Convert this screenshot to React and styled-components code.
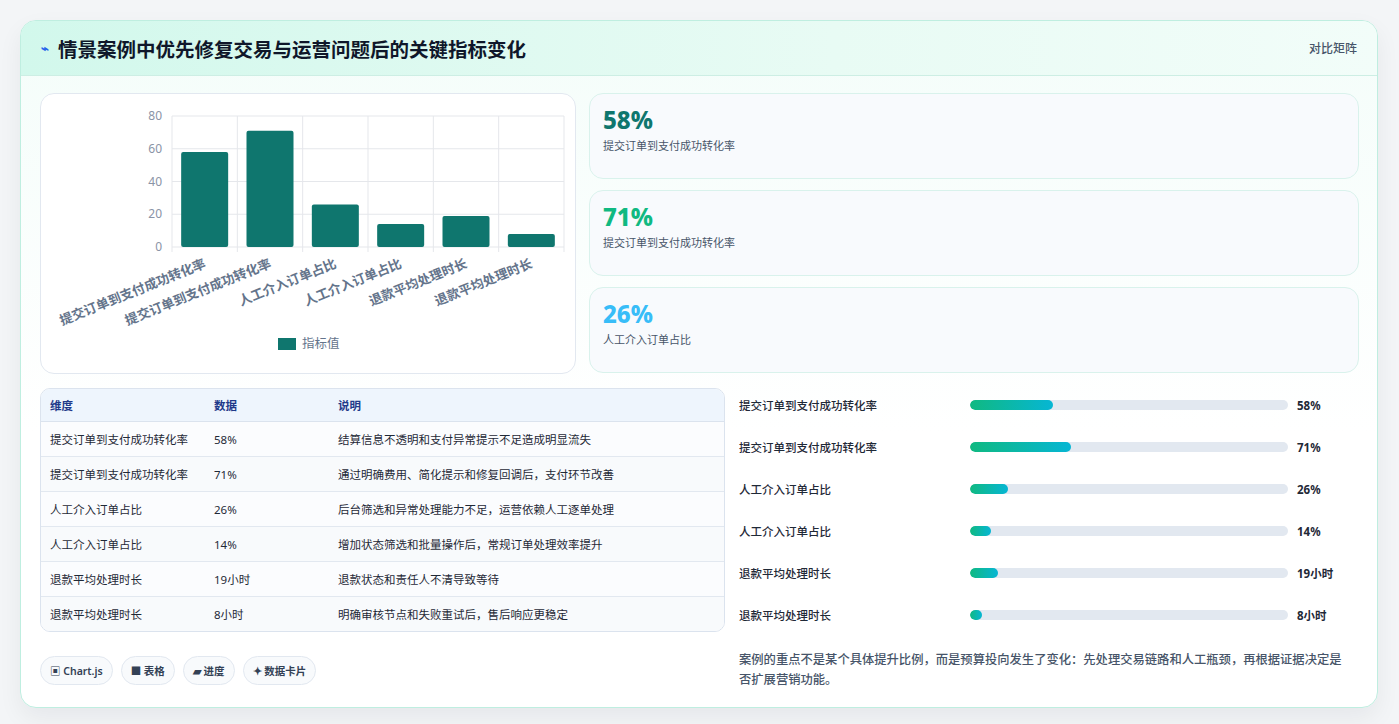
import styled, { createGlobalStyle } from "styled-components";

const GlobalStyle = createGlobalStyle`
  body {
    margin: 0;
    background: #f3f5f7;
    font-family: "Noto Sans", "Noto Sans CJK SC", sans-serif;
    color: #0f172a;
  }
`;

const metrics = [
  { label: "提交订单到支付成功转化率", value: 58, text: "58%", note: "结算信息不透明和支付异常提示不足造成明显流失" },
  { label: "提交订单到支付成功转化率", value: 71, text: "71%", note: "通过明确费用、简化提示和修复回调后，支付环节改善" },
  { label: "人工介入订单占比", value: 26, text: "26%", note: "后台筛选和异常处理能力不足，运营依赖人工逐单处理" },
  { label: "人工介入订单占比", value: 14, text: "14%", note: "增加状态筛选和批量操作后，常规订单处理效率提升" },
  { label: "退款平均处理时长", value: 19, text: "19小时", note: "退款状态和责任人不清导致等待" },
  { label: "退款平均处理时长", value: 8, text: "8小时", note: "明确审核节点和失败重试后，售后响应更稳定" },
];

const statColors = ["#0f766e", "#10b981", "#38bdf8"];

// bar chart drawn by hand, Chart.js look
function BarChart() {
  const x0 = 131, x1 = 523, yTop = 22, yBase = 153;
  const step = (x1 - x0) / 6;
  const scale = (yBase - yTop) / 80;
  return (
    <svg width="535" height="279" viewBox="0 0 535 279">
      {[0, 20, 40, 60, 80].map((t) => {
        const y = yBase - t * scale;
        return (
          <g key={t}>
            <line x1={x0} x2={x1} y1={y} y2={y} stroke="#e5e7eb" />
            <text x={x0 - 10} y={y + 4} fontSize="12" fill="#8a94a6" textAnchor="end">{t}</text>
          </g>
        );
      })}
      {Array.from({ length: 7 }).map((_, i) => (
        <line key={i} x1={x0 + i * step} x2={x0 + i * step} y1={yTop} y2={yBase + 5} stroke="#e5e7eb" />
      ))}
      {metrics.map((m, i) => {
        const cx = x0 + step * (i + 0.5);
        const h = m.value * scale;
        return (
          <g key={i}>
            <rect x={cx - 23.5} y={yBase - h} width="47" height={h} rx="2" fill="#0f766e" />
            <text
              x={cx + 2}
              y={yBase + 20}
              fontSize="13"
              fontWeight="600"
              fill="#64748b"
              textAnchor="end"
              transform={`rotate(-22 ${cx + 2} ${yBase + 20})`}
            >
              {m.label}
            </text>
          </g>
        );
      })}
      <rect x="237" y="244" width="18" height="12" fill="#0f766e" />
      <text x="261" y="254" fontSize="12.5" fill="#64748b">指标值</text>
    </svg>
  );
}

export default function App() {
  return (
    <>
      <GlobalStyle />
      <Page>
        <Card>
          <Header>
            <Title>
              <Bolt>⌁</Bolt>情景案例中优先修复交易与运营问题后的关键指标变化
            </Title>
            <HeaderTag>对比矩阵</HeaderTag>
          </Header>
          <Body>
            <TopRow>
              <ChartPanel>
                <BarChart />
              </ChartPanel>
              <StatList>
                {metrics.slice(0, 3).map((m, i) => (
                  <StatCard key={i}>
                    <StatValue $color={statColors[i]}>{m.text}</StatValue>
                    <StatLabel>{m.label}</StatLabel>
                  </StatCard>
                ))}
              </StatList>
            </TopRow>
            <BottomRow>
              <LeftCol>
                <Table>
                  <colgroup>
                    <col style={{ width: 164 }} />
                    <col style={{ width: 124 }} />
                    <col />
                  </colgroup>
                  <thead>
                    <tr>
                      <Th>维度</Th>
                      <Th>数据</Th>
                      <Th>说明</Th>
                    </tr>
                  </thead>
                  <tbody>
                    {metrics.map((m, i) => (
                      <Tr key={i}>
                        <Td>{m.label}</Td>
                        <Td>{m.text}</Td>
                        <Td>{m.note}</Td>
                      </Tr>
                    ))}
                  </tbody>
                </Table>
                <Chips>
                  <Chip>▣ Chart.js</Chip>
                  <Chip>■ 表格</Chip>
                  <Chip>▰ 进度</Chip>
                  <Chip>✦ 数据卡片</Chip>
                </Chips>
              </LeftCol>
              <RightCol>
                {metrics.map((m, i) => (
                  <ProgressRow key={i}>
                    <ProgressLabel>{m.label}</ProgressLabel>
                    <Track>
                      <Fill style={{ width: `${m.value * 1.41 + 1}px` }} />
                    </Track>
                    <ProgressValue>{m.text}</ProgressValue>
                  </ProgressRow>
                ))}
                <Summary>
                  案例的重点不是某个具体提升比例，而是预算投向发生了变化：先处理交易链路和人工瓶颈，再根据证据决定是否扩展营销功能。
                </Summary>
              </RightCol>
            </BottomRow>
          </Body>
        </Card>
      </Page>
    </>
  );
}

const Page = styled.div`
  padding: 20px 21px 22px 20px;
`;

const Card = styled.div`
  background: linear-gradient(180deg, #f4fdfa 0%, #ffffff 60%);
  border: 1px solid #bfeee0;
  border-radius: 16px;
  box-shadow: 0 10px 24px rgba(15, 23, 42, 0.06);
  overflow: hidden;
`;

const Header = styled.div`
  height: 54px;
  display: flex;
  align-items: center;
  justify-content: space-between;
  padding: 0 20px;
  background: linear-gradient(90deg, #d2f8ec 0%, #e8fbf4 60%, #f2fdf9 100%);
  border-bottom: 1px solid #cdeee4;
`;

const Title = styled.h1`
  margin: 0;
  font-size: 19.5px;
  font-weight: 700;
  color: #0f172a;
  display: flex;
  align-items: center;
  gap: 9px;
`;

const Bolt = styled.span`
  color: #2563eb;
  font-size: 13px;
`;

const HeaderTag = styled.span`
  font-size: 12px;
  color: #475569;
  font-weight: 500;
`;

const Body = styled.div`
  padding: 17px 18px 17px 19px;
`;

const TopRow = styled.div`
  display: grid;
  grid-template-columns: 536px 1fr;
  gap: 13px;
`;

const ChartPanel = styled.div`
  background: #fff;
  border: 1px solid #e2e8f0;
  border-radius: 14px;
  height: 279px;
`;

const StatList = styled.div`
  display: flex;
  flex-direction: column;
  gap: 11px;
`;

const StatCard = styled.div`
  height: 86px;
  box-sizing: border-box;
  padding: 11px 13px;
  background: #f8fafd;
  border: 1px solid #d9f2ec;
  border-radius: 14px;
`;

const StatValue = styled.div`
  font-size: 24px;
  font-weight: 800;
  line-height: 30px;
  color: ${(p) => p.$color};
`;

const StatLabel = styled.div`
  margin-top: 2px;
  font-size: 11px;
  color: #475569;
`;

const BottomRow = styled.div`
  display: grid;
  grid-template-columns: 685px 1fr;
  gap: 14px;
  margin-top: 14px;
`;

const LeftCol = styled.div`
  display: flex;
  flex-direction: column;
  gap: 24px;
`;

const Table = styled.table`
  width: 100%;
  table-layout: fixed;
  border-collapse: separate;
  border-spacing: 0;
  border: 1px solid #dbe3ee;
  border-radius: 10px;
  overflow: hidden;
  font-size: 11.5px;
`;

const Th = styled.th`
  text-align: left;
  height: 32px;
  padding: 0 9px;
  background: #eef5fd;
  color: #1e3a8a;
  font-weight: 600;
  border-bottom: 1px solid #dbe3ee;
`;

const Tr = styled.tr`
  background: #fbfcfe;
  &:nth-child(even) { background: #f8fafc; }
  &:not(:last-child) td { border-bottom: 1px solid #e2e8f0; }
`;

const Td = styled.td`
  height: 34px;
  padding: 0 9px;
  color: #1f2937;
  white-space: nowrap;
`;

const Chips = styled.div`
  display: flex;
  gap: 8px;
`;

const Chip = styled.span`
  padding: 6px 9px;
  border: 1px solid #e2e8f0;
  border-radius: 999px;
  background: #f8fafc;
  font-size: 10.5px;
  font-weight: 600;
  color: #334155;
`;

const RightCol = styled.div`
  display: flex;
  flex-direction: column;
  margin-top: -4px;
  padding-right: 14px;
`;

const ProgressRow = styled.div`
  height: 42px;
  display: grid;
  grid-template-columns: 231px 318px 1fr;
  align-items: center;
`;

const ProgressLabel = styled.span`
  font-size: 11.5px;
  color: #1f2937;
  font-weight: 500;
`;

const Track = styled.div`
  height: 10px;
  border-radius: 5px;
  background: #e2e8f0;
  overflow: hidden;
`;

const Fill = styled.div`
  height: 100%;
  border-radius: 5px;
  background: linear-gradient(90deg, #10b981, #06b6d4);
`;

const ProgressValue = styled.span`
  padding-left: 9px;
  font-size: 11.5px;
  font-weight: 700;
  color: #1f2937;
`;

const Summary = styled.p`
  margin: 14px 0 0;
  font-size: 12.3px;
  line-height: 20px;
  color: #475569;
  font-weight: 500;
`;
